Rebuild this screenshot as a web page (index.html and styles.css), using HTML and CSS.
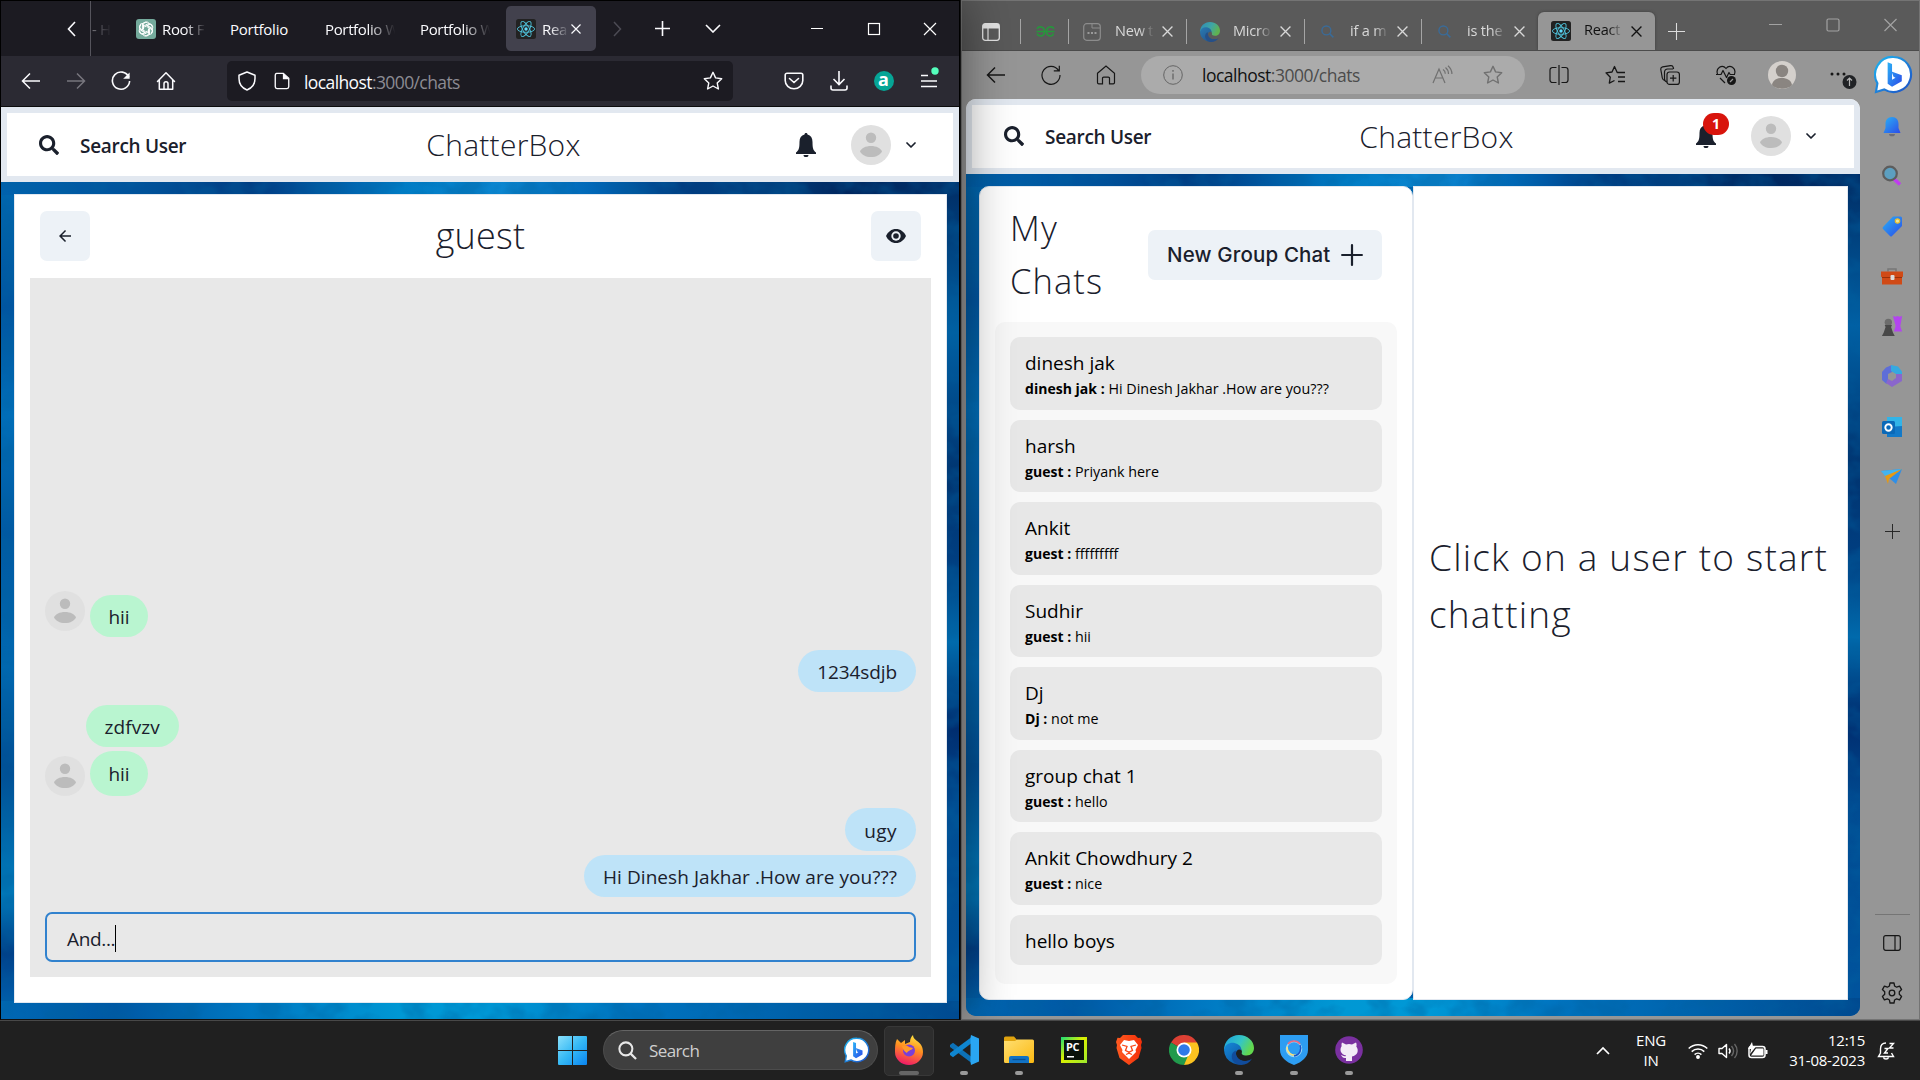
FILE: index.html
```html
<!DOCTYPE html>
<html lang="en">
<head>
<meta charset="utf-8">
<title>ChatterBox</title>
<link rel="stylesheet" href="styles.css">
</head>
<body>
<svg class="sprite" width="0" height="0" aria-hidden="true">
  <defs>
    <linearGradient id="gWin" x1="0" y1="0" x2="1" y2="1"><stop offset="0" stop-color="#8be0fb"/><stop offset=".5" stop-color="#35b9f5"/><stop offset="1" stop-color="#0a84f0"/></linearGradient>
    <linearGradient id="gBing" x1="0" y1="0" x2="1" y2="1"><stop offset="0" stop-color="#1fb6f0"/><stop offset="1" stop-color="#1d4fc4"/></linearGradient>
    <linearGradient id="gFox" x1=".7" y1="0" x2=".4" y2="1"><stop offset="0" stop-color="#ffe640"/><stop offset=".45" stop-color="#ff9020"/><stop offset="1" stop-color="#f01a68"/></linearGradient>
    <linearGradient id="gEdgeA" x1="0" y1="0" x2="1" y2=".4"><stop offset="0" stop-color="#1b9fe0"/><stop offset=".6" stop-color="#35c6c4"/><stop offset="1" stop-color="#62d84e"/></linearGradient>
    <linearGradient id="gEdgeB" x1="0" y1="0" x2="1" y2="1"><stop offset="0" stop-color="#1589d8"/><stop offset="1" stop-color="#0c4a98"/></linearGradient>
    <linearGradient id="gFold" x1="0" y1="0" x2="1" y2="1"><stop offset="0" stop-color="#ffdf72"/><stop offset="1" stop-color="#fcb912"/></linearGradient>
    <linearGradient id="gBlue" x1="0" y1="0" x2="1" y2="1"><stop offset="0" stop-color="#2bb2f5"/><stop offset="1" stop-color="#2b4be8"/></linearGradient>
    <linearGradient id="gBrave" x1="0" y1="0" x2="1" y2="0"><stop offset="0" stop-color="#ff5a20"/><stop offset="1" stop-color="#f4300a"/></linearGradient>
    <filter id="water" x="0" y="0" width="100%" height="100%"><feTurbulence type="fractalNoise" baseFrequency=".035 .045" numOctaves="3" seed="7"/><feColorMatrix values="0 0 0 0 0  0 0 0 0 .12  0 0 0 0 .35  3.4 0 0 0 -1.400"/></filter>
  </defs>
  <symbol id="search" viewBox="0 0 512 512"><path d="M505 442.700 405.300 343c-4.500-4.500-10.600-7-17-7H372c27.600-35.300 44-79.700 44-128C416 93.100 322.900 0 208 0S0 93.100 0 208s93.100 208 208 208c48.300 0 92.700-16.400 128-44v16.300c0 6.400 2.500 12.500 7 17l99.700 99.700c9.400 9.400 24.600 9.400 33.900 0l28.300-28.300c9.400-9.400 9.400-24.600.1-34zM208 336c-70.700 0-128-57.200-128-128 0-70.700 57.200-128 128-128 70.700 0 128 57.200 128 128 0 70.700-57.200 128-128 128z" fill="currentColor"/></symbol>
  <symbol id="bell" viewBox="0 0 20 24"><path d="M10 0c1 0 1.500.7 1.500 1.500 3.300.8 5 3.500 5 7.500 0 6 .7 8.500 3.500 10.500V21H0v-1.500C2.800 17.500 3.500 15 3.500 9c0-4 1.700-6.700 5-7.500C8.500.7 9 0 10 0zM7.500 22h5a2.500 2.200 0 0 1-5 0z" fill="currentColor"/></symbol>
  <symbol id="chev" viewBox="0 0 10 6"><path d="M1 1l4 4 4-4" fill="none" stroke="currentColor" stroke-width="1.700" stroke-linecap="round" stroke-linejoin="round"/></symbol>
  <symbol id="avatar" viewBox="0 0 40 40"><circle cx="20" cy="20" r="20" fill="#e0e0e0"/><circle cx="20" cy="12.700" r="5.200" fill="#bcbcbc"/><path d="M9 26.500c1.500-3.300 5.500-5.500 11-5.500s9.500 2.200 11 5.500C29 30 25.500 32 20 32S11 30 9 26.500z" fill="#bcbcbc"/></symbol>
  <symbol id="react" viewBox="0 0 20 20"><rect width="20" height="20" rx="2.500" fill="#222"/><g fill="none" stroke="#4fc3dc" stroke-width=".9"><ellipse cx="10" cy="10" rx="8.600" ry="3.300"/><ellipse cx="10" cy="10" rx="8.600" ry="3.300" transform="rotate(60 10 10)"/><ellipse cx="10" cy="10" rx="8.600" ry="3.300" transform="rotate(120 10 10)"/></g><circle cx="10" cy="10" r="1.700" fill="#61dafb"/></symbol>
  <symbol id="x" viewBox="0 0 10 10"><path d="M.5.5l9 9M9.500.5l-9 9" stroke="currentColor" stroke-width="1.200"/></symbol>
  <symbol id="plus" viewBox="0 0 20 20"><path d="M10 1v18M1 10h18" stroke="currentColor" stroke-width="2" stroke-linecap="round"/></symbol>
  <symbol id="plusThin" viewBox="0 0 16 16"><path d="M8 0v16M0 8h16" stroke="currentColor" stroke-width="1"/></symbol>
  <symbol id="back" viewBox="0 0 20 20"><path d="M9 2.500L1.500 10 9 17.500M1.500 10h17.500" fill="none" stroke="currentColor" stroke-width="1.500"/></symbol>
  <symbol id="reload" viewBox="0 0 20 20"><path d="M17.800 6A8.600 8.600 0 1 0 18.600 10" fill="none" stroke="currentColor" stroke-width="1.600"/><path d="M18.600 1.500v6.300h-6.400z" fill="currentColor"/></symbol>
  <symbol id="reloadThin" viewBox="0 0 20 20"><path d="M17.500 5.300A9 9 0 1 0 19 10M18.300.7v5.100h-5.500" fill="none" stroke="currentColor" stroke-width="1.200"/></symbol>
  <symbol id="home" viewBox="0 0 20 20"><path d="M1.500 10.500L10 1.800l8.500 8.700M3.300 9v9.200h13.400V9M8 18v-5.200a2 2 0 0 1 4 0V18" fill="none" stroke="currentColor" stroke-width="1.500" stroke-linecap="round" stroke-linejoin="round"/></symbol>
  <symbol id="homeThin" viewBox="0 0 20 20"><path d="M1.500 8.300L10 1l8.500 7.300v9.200a1.300 1.300 0 0 1-1.300 1.300h-3.700v-5.500a1.200 1.200 0 0 0-1.200-1.200H7.700a1.200 1.200 0 0 0-1.200 1.200v5.500H2.800a1.300 1.300 0 0 1-1.300-1.300z" fill="none" stroke="currentColor" stroke-width="1.200"/></symbol>
  <symbol id="shield" viewBox="0 0 20 20"><path d="M10 1l8 3.300v3.200c0 5-3 9.500-8 11.500-5-2-8-6.500-8-11.500V4.300z" fill="none" stroke="currentColor" stroke-width="1.500" stroke-linejoin="round"/></symbol>
  <symbol id="page" viewBox="0 0 20 20"><path d="M4 1.500h7.500L17.500 7v9.500a2 2 0 0 1-2 2h-11a2 2 0 0 1-2-2v-13a2 2 0 0 1 1.500-2z" fill="none" stroke="currentColor" stroke-width="1.500"/><path d="M11 1v7h7z" fill="currentColor"/></symbol>
  <symbol id="star" viewBox="0 0 20 20"><path d="M10 1.300l2.600 5.600 6.100.8-4.500 4.200 1.200 6.100L10 15l-5.400 3 1.200-6.100L1.300 7.700l6.100-.8z" fill="none" stroke="currentColor" stroke-width="1.400" stroke-linejoin="round"/></symbol>
  <symbol id="bing" viewBox="0 0 40 40"><path d="M20 2a18 18 0 1 1-9.500 33.300L2 38l1.500-9A18 18 0 0 1 20 2z" fill="#fff" stroke="url(#gBing)" stroke-width="2.200"/><path d="M14 7.500l4.500 1.800v16l3.500-2-2-1-2-5.500 10.500 4v6L18.500 32.500 14 29.500z" fill="url(#gBlue)"/></symbol>
  <symbol id="edge" viewBox="0 0 30 30"><path d="M0 15C0 6.500 6.500 0 15 0s15 6 15 13c0 4.500-3 7.500-7.500 7.500-4 0-5.500-1.500-4.500-3.500C17.500 10.500 6 8 0 15z" fill="url(#gEdgeA)"/><path d="M0 15c1-5.500 6-8 10.500-7 4 1 7 3.600 7 7.200C14 13 10.500 17 12.500 21.500c2 4 7 5.500 12.500 4A15 15 0 0 1 0 15z" fill="url(#gEdgeB)"/><path d="M12 15.500c-1 5.500 3 10.500 9 10.500 3 0 5.500-1 7-2.500-4 7-12 8-17 4.500-5-4-4-11 1-12.500z" fill="#114c9c"/></symbol>
  <symbol id="mag" viewBox="0 0 14 14"><circle cx="5.800" cy="5.800" r="4.800" fill="none" stroke="currentColor" stroke-width="1.500"/><path d="M9.300 9.300L13.300 13.300" stroke="currentColor" stroke-width="1.600"/></symbol>
</svg>

<!-- Edge window, right half of the desktop -->
<section class="window edge-window">
  <div class="edge-tabs">
    <svg class="e-side" width="18" height="18" viewBox="0 0 18 18"><rect x=".7" y=".7" width="16.600" height="16.600" rx="2.500" fill="none" stroke="#e4e4e4" stroke-width="1.300"/><path d="M1 1h16v4.500H1z" fill="#e4e4e4"/><path d="M6 5v12" stroke="#e4e4e4" stroke-width="1.200"/></svg>
    <i class="sep s1"></i>
    <svg class="gfg" width="19" height="11" viewBox="0 0 19 11"><path d="M.5 5.500h18M1 2.800C2.500 0 8.500 0 8.500 5.500S2.500 11 1 7.500M18 2.800C16.500 0 10.500 0 10.500 5.500s6 5.500 7 2" fill="none" stroke="#27963c" stroke-width="1.600"/></svg>
    <i class="sep s2"></i>
    <svg class="e-new" width="18" height="18" viewBox="0 0 18 18"><rect x=".7" y=".7" width="16.600" height="16.600" rx="3" fill="none" stroke="#8c8c8c" stroke-width="1.200"/><path d="M9 1v4h8" fill="none" stroke="#8c8c8c"/><path d="M4.500 10h2M8 10h2M11.500 10h2" stroke="#9a9a9a" stroke-width="1.800"/></svg>
    <span class="etab-text t-new">New t</span><svg class="ex" width="11" height="11"><use href="#x"/></svg>
    <i class="sep s3"></i>
    <svg class="e-edge" width="20" height="20" opacity=".7"><use href="#edge"/></svg>
    <span class="etab-text t-micro">Micro</span><svg class="ex" width="11" height="11"><use href="#x"/></svg>
    <i class="sep s3"></i>
    <svg class="e-mag" width="13" height="13"><use href="#mag"/></svg>
    <span class="etab-text t-if">if a m</span><svg class="ex" width="11" height="11"><use href="#x"/></svg>
    <i class="sep s3"></i>
    <svg class="e-mag" width="13" height="13"><use href="#mag"/></svg>
    <span class="etab-text t-is">is the</span><svg class="ex" width="11" height="11"><use href="#x"/></svg>
    <div class="etab-active"><svg width="20" height="20"><use href="#react"/></svg><span class="etab-text">React</span><svg class="ex" width="11" height="11"><use href="#x"/></svg></div>
    <svg class="e-plus" width="17" height="17"><use href="#plusThin"/></svg>
    <svg class="e-controls" width="136" height="14" viewBox="0 0 136 14" fill="none" stroke="#a2a2a2" stroke-width="1.200"><path d="M0 6.500h13M115.500 1l12 12M127.500 1l-12 12"/><rect x="58" y="1" width="12" height="12" rx="1.500"/></svg>
  </div>
  <div class="edge-bar">
    <div class="ebtn"><svg width="20" height="20"><use href="#back"/></svg></div>
    <div class="ebtn"><svg width="20" height="20"><use href="#reloadThin"/></svg></div>
    <div class="ebtn"><svg width="20" height="20"><use href="#homeThin"/></svg></div>
    <div class="edge-url">
      <svg width="20" height="20" viewBox="0 0 20 20" fill="none" stroke="#656565"><circle cx="10" cy="10" r="9.300"/><path d="M10 8.500v6M10 5v1.700" stroke-width="1.300"/></svg>
      <span class="url-text">localhost<em>:3000/chats</em></span>
      <svg class="read" width="21" height="20" viewBox="0 0 21 20" fill="none" stroke="#707070" stroke-width="1.200"><path d="M1 18L7 4l6 14M3.200 13h7.600M11 4.500c1.500 1 2.300 2.500 2.300 4.200M13.500 2.500c2 1.600 3 3.800 3 6.500M16 .7c2.500 2.200 3.900 5 3.900 8.300"/></svg>
      <svg width="20" height="20" color="#707070"><use href="#star"/></svg>
    </div>
    <div class="etools">
      <svg width="20" height="20" viewBox="0 0 20 20" fill="none" stroke="#161616" stroke-width="1.200"><path d="M7.500 2.500h-4a2.500 2.500 0 0 0-2.500 2.500v10a2.500 2.500 0 0 0 2.500 2.500h4M12.500 2.500h4A2.500 2.500 0 0 1 19 5v10a2.500 2.500 0 0 1-2.500 2.500h-4M10 0v20"/></svg>
      <svg width="20" height="20" viewBox="0 0 20 20" fill="none" stroke="#161616" stroke-width="1.300"><path d="M14 7.500h-1.800L9.500 1.500 7 7l-6 .8 4.300 4.400-1 6L9.500 15.500M12.500 7.500H20M13 12h7M13 16.500h7" stroke-linejoin="round"/></svg>
      <svg width="20" height="20" viewBox="0 0 20 20" fill="none" stroke="#161616" stroke-width="1.200"><rect x="7" y="7" width="12.400" height="12.400" rx="2.500"/><path d="M13.200 10v6.400M10 13.200h6.400M4.500 15.500C3 15 2.500 14 2.300 13L.8 4.500c-.2-1.300.5-2.400 1.800-2.700L10.500.7c1.400-.2 2.500.6 2.800 1.900L13.600 4M7 17C5 16.500 4.500 15.500 4.500 14V7a3 3 0 0 1 3-3H13"/></svg>
      <svg width="20" height="20" viewBox="0 0 20 20" fill="none" stroke="#161616" stroke-width="1.200"><path d="M1.500 9C-.5 3.500 6-1.500 10 3.500 14-1.500 20.500 3.500 18.500 9M4 13l5 5M0 9.500h5l2-4 3.500 7 2.500-5 1.200 2H19" stroke-linejoin="round"/><circle cx="15.500" cy="15.500" r="4.500" fill="#161616" stroke="none"/><path d="M14 17l3-3" stroke="#969696"/></svg>
      <svg width="28" height="28" viewBox="0 0 28 28"><circle cx="14" cy="14" r="14" fill="#d4d0cc"/><circle cx="14" cy="10" r="6.200" fill="#8a8581"/><path d="M4 24c1-5 5-7 10-7s9 2 10 7c-5 5-15 5-20 0z" fill="#8a8581"/></svg>
      <svg width="30" height="28" viewBox="0 0 30 28"><g fill="#161616"><circle cx="5" cy="13" r="1.500"/><circle cx="11" cy="13" r="1.500"/><circle cx="17" cy="13" r="1.500"/></g><circle cx="22.500" cy="21" r="7" fill="#202225"/><path d="M22.500 25v-8M20 19.500l2.500-2.500 2.500 2.500" fill="none" stroke="#b5b5b5" stroke-width="1.200"/></svg>
    </div>
  </div>
  <div class="edge-main">
    <div class="page edge-page">
      <header class="app-head edge-head">
        <div class="find"><svg width="20" height="20"><use href="#search"/></svg><b>Search User</b></div>
        <h1 class="brand">ChatterBox</h1>
        <div class="user"><span class="bell-wrap"><svg width="20" height="24"><use href="#bell"/></svg><span class="badge">1</span></span><svg width="40" height="40"><use href="#avatar"/></svg><svg class="uchev" width="10" height="6"><use href="#chev"/></svg></div>
      </header>
      <div class="canvas edge-canvas">
        <svg class="water"><rect width="100%" height="100%" filter="url(#water)"/></svg>
        <div class="panes">
          <aside class="chats">
            <div class="chats-head"><h2>My Chats</h2><button class="new-group"><span>New Group Chat</span><svg width="22" height="22"><use href="#plus"/></svg></button></div>
            <ul class="chat-list">
              <li><p>dinesh jak</p><small><b>dinesh jak :</b> Hi Dinesh Jakhar .How are you???</small></li>
              <li><p>harsh</p><small><b>guest :</b> Priyank here</small></li>
              <li><p>Ankit</p><small><b>guest :</b> fffffffff</small></li>
              <li><p>Sudhir</p><small><b>guest :</b> hii</small></li>
              <li><p>Dj</p><small><b>Dj :</b> not me</small></li>
              <li><p>group chat 1</p><small><b>guest :</b> hello</small></li>
              <li><p>Ankit Chowdhury 2</p><small><b>guest :</b> nice</small></li>
              <li class="solo"><p>hello boys</p></li>
            </ul>
          </aside>
          <div class="empty"><p>Click on a user to start<br>chatting</p></div>
        </div>
      </div>
    </div>
    <nav class="edge-rail">
      <svg width="22" height="22" viewBox="0 0 22 22"><path d="M11 2c4.500 0 6.500 3 6.500 7v4l2 5h-17l2-5V9c0-4 2-7 6.500-7z" fill="url(#gBlue)"/><path d="M8 19h6a3 2.300 0 0 1-6 0z" fill="#6d6d78"/></svg>
      <svg width="22" height="22" viewBox="0 0 22 22"><path d="M13 14l6 5.500" stroke="#c03cf0" stroke-width="3.500"/><circle cx="9" cy="8.500" r="6.800" fill="#5c9fc0" stroke="#5d5d5d" stroke-width="2.200"/></svg>
      <svg width="22" height="22" viewBox="0 0 22 22"><path d="M12 1.500h7.500q1.500 0 1.500 1.500v8L11 21q-1 1-2 0l-7-7q-1-1 0-2z" fill="url(#gBlue)"/><circle cx="16.500" cy="6" r="2.200" fill="#e8e8a0" stroke="#e9b92c" stroke-width="1.200"/></svg>
      <svg width="22" height="22" viewBox="0 0 22 22"><path d="M7 6.500V4h8v2.500" fill="none" stroke="#777" stroke-width="1.500"/><path d="M0 6.500h22v5l-1 1v7H1v-7l-1-1z" fill="#d04a16"/><path d="M1 12.500h20" stroke="#9a3008"/><rect x="9.500" y="10" width="4" height="5" rx="1" fill="#ddd"/></svg>
      <svg width="22" height="22" viewBox="0 0 24 24"><path d="M13 1l3 1 2-1 2 1 3-1-1 6-1 5 2 6h-9l2-6z" fill="#b344ef"/><circle cx="8" cy="8" r="4" fill="#6c6c6c"/><path d="M4 11h8l-1 2 2 6 2 4H1l2-4 2-6z" fill="#484848"/></svg>
      <svg width="22" height="22" viewBox="0 0 22 22"><path d="M5 2.500L11 0v7L7 9v5L5.500 19 1 15V7z" fill="#5e6ed8"/><path d="M10 0l7 1.500 4 5v6L15 9l-5-3z" fill="#36a9e0"/><path d="M21 9v7L11 22l-6-4 2-4 4 2 4-3V9z" fill="#8a66cc"/></svg>
      <svg width="22" height="22" viewBox="0 0 22 22"><path d="M6 1h15v20H6z" fill="#32b4e8"/><path d="M6 11l15-1v11H6z" fill="#1379c8"/><rect x="1" y="5" width="13" height="13" rx="1.500" fill="#0b69b8"/><circle cx="7.500" cy="11.500" r="3.200" fill="none" stroke="#fff" stroke-width="1.900"/></svg>
      <svg width="22" height="22" viewBox="0 0 22 22"><path d="M0 5l21-2-6 15z" fill="#2e8fe8"/><path d="M0 5l21-2L5 11z" fill="#42b4f0"/><path d="M21 3L4 10l3 8 1-5z" fill="#e59a14"/></svg>
      <svg class="rail-plus" width="15" height="15" color="#222"><use href="#plusThin"/></svg>
      <i class="rail-line"></i>
      <svg width="18" height="16" viewBox="0 0 18 16" fill="none" stroke="#161616" stroke-width="1.200"><rect x=".7" y=".7" width="16.600" height="14.600" rx="2"/><path d="M12 1v14"/></svg>
      <svg class="gear" width="22" height="22" viewBox="0 0 22 22" fill="none" stroke="#161616" stroke-width="1.300" stroke-linejoin="round"><path d="M9 1h4l.6 3 2 1.200 3-1 2 3.400-2.300 2.100v2.600l2.300 2.100-2 3.400-3-1-2 1.200L13 21H9l-.6-3-2-1.200-3 1-2-3.400 2.300-2.100V9.700L1.400 7.600l2-3.400 3 1 2-1.200z"/><circle cx="11" cy="11" r="2.800"/></svg>
    </nav>
  </div>
  <div class="rail-bing"><svg width="39" height="39"><use href="#bing"/></svg></div>
</section>

<!-- Firefox window, left half of the desktop -->
<section class="window fox-window">
  <div class="fox-tabs">
    <svg class="f-left" width="9" height="16" viewBox="0 0 9 16"><path d="M8 1L1.500 8 8 15" fill="none" stroke="#fbfbfe" stroke-width="1.600"/></svg>
    <i class="fox-line"></i>
    <span class="ftext f-h">- H</span>
    <svg class="f-gpt" width="20" height="20" viewBox="0 0 20 20"><rect width="20" height="20" rx="3" fill="#74aa9c"/><g fill="none" stroke="#fff" stroke-width="1"><path id="petal" d="M7.500 10.500V5.800a3 3 0 0 1 5.700-1.200M7.500 7.300l4-2.300a3 3 0 0 1 4.500 2.600"/><use href="#petal" transform="rotate(60 10 10)"/><use href="#petal" transform="rotate(120 10 10)"/><use href="#petal" transform="rotate(180 10 10)"/><use href="#petal" transform="rotate(240 10 10)"/><use href="#petal" transform="rotate(300 10 10)"/></g></svg>
    <span class="ftext f-root">Root F</span>
    <span class="ftext f-p1">Portfolio</span>
    <span class="ftext f-p2">Portfolio W</span>
    <span class="ftext f-p3">Portfolio W</span>
    <div class="ftab"><svg width="20" height="20"><use href="#react"/></svg><span class="ftext">Rea</span><svg width="10" height="10" color="#fbfbfe"><use href="#x"/></svg></div>
    <svg class="f-right" width="9" height="16" viewBox="0 0 9 16"><path d="M1 1l6.500 7L1 15" fill="none" stroke="#4c4b54" stroke-width="1.500"/></svg>
    <svg class="f-plus" width="15" height="15" viewBox="0 0 15 15"><path d="M7.500 0v15M0 7.500h15" stroke="#fbfbfe" stroke-width="1.600"/></svg>
    <svg class="f-down" width="16" height="9" viewBox="0 0 16 9"><path d="M1 1l7 7 7-7" fill="none" stroke="#fbfbfe" stroke-width="1.600"/></svg>
    <svg class="f-controls" width="126" height="14" viewBox="0 0 126 14" fill="none" stroke="#fff" stroke-width="1.200"><path d="M0 6.500h12M113 1l12 12M125 1l-12 12"/><rect x="57.500" y="1.500" width="11" height="11"/></svg>
  </div>
  <div class="fox-bar">
    <div class="fbtn"><svg width="20" height="20"><use href="#back"/></svg></div>
    <div class="fbtn off"><svg class="flip" width="20" height="20"><use href="#back"/></svg></div>
    <div class="fbtn"><svg width="20" height="20"><use href="#reload"/></svg></div>
    <div class="fbtn"><svg width="20" height="20"><use href="#home"/></svg></div>
    <div class="fox-url">
      <svg width="20" height="20"><use href="#shield"/></svg><svg class="f-page" width="18" height="18"><use href="#page"/></svg>
      <span class="url-text">localhost<em>:3000/chats</em></span>
      <svg class="f-star" width="20" height="20"><use href="#star"/></svg>
    </div>
    <div class="fox-tools">
      <div class="fbtn"><svg width="20" height="18" viewBox="0 0 20 18" fill="none" stroke="currentColor" stroke-width="1.600"><path d="M3 1.200h14a1.800 1.800 0 0 1 1.800 1.800v5.500a8.500 8 0 0 1-17.600 0V3A1.800 1.800 0 0 1 3 1.200z"/><path d="M5.500 6.500L10 10.500l4.500-4" stroke-linecap="round"/></svg></div>
      <div class="fbtn"><svg width="18" height="20" viewBox="0 0 18 20" fill="none" stroke="currentColor" stroke-width="1.600"><path d="M9 0v13M3.500 8L9 13.500 14.500 8M1 14.500V17a2 2 0 0 0 2 2h12a2 2 0 0 0 2-2v-2.500"/></svg></div>
      <div class="fbtn"><span class="ask">a</span></div>
      <div class="fbtn"><svg class="menu" width="20" height="22" viewBox="0 0 20 22"><path d="M2 8.500h7M2 14h16M2 19.500h16" stroke="#fbfbfe" stroke-width="1.600"/><circle cx="16" cy="4" r="3.700" fill="#54ffbd"/></svg></div>
    </div>
  </div>
  <div class="page fox-page">
    <header class="app-head fox-head">
      <div class="find"><svg width="20" height="20"><use href="#search"/></svg><b>Search User</b></div>
      <h1 class="brand">ChatterBox</h1>
      <div class="user"><svg width="20" height="24"><use href="#bell"/></svg><svg width="40" height="40"><use href="#avatar"/></svg><svg class="uchev" width="10" height="6"><use href="#chev"/></svg></div>
    </header>
    <div class="canvas fox-canvas">
      <svg class="water"><rect width="100%" height="100%" filter="url(#water)"/></svg>
      <main class="chat-box">
        <div class="chat-head">
          <button class="sq"><svg width="18" height="18" viewBox="0 0 24 24"><path d="M20 11H7.830l5.590-5.590L12 4l-8 8 8 8 1.410-1.410L7.830 13H20v-2z" fill="#1a202c"/></svg></button>
          <h2>guest</h2>
          <button class="sq"><svg width="20" height="14" viewBox="0 0 20 14"><path d="M10 0c4.500 0 8 2.700 10 7-2 4.300-5.500 7-10 7S2 11.300 0 7c2-4.300 5.500-7 10-7z" fill="#1a202c"/><circle cx="10" cy="7" r="4.700" fill="#edf2f7"/><circle cx="10" cy="7" r="2.800" fill="#1a202c"/></svg></button>
        </div>
        <div class="messages">
          <div class="msg m1"><svg width="40" height="40"><use href="#avatar"/></svg><span class="them">hii</span></div>
          <div class="msg me m2"><span>1234sdjb</span></div>
          <div class="msg m3"><span class="them">zdfvzv</span></div>
          <div class="msg m4"><svg width="40" height="40"><use href="#avatar"/></svg><span class="them">hii</span></div>
          <div class="msg me m5"><span>ugy</span></div>
          <div class="msg me m6"><span class="wide">Hi Dinesh Jakhar .How are you???</span></div>
          <div class="compose">And...<i></i></div>
        </div>
      </main>
    </div>
  </div>
</section>

<footer class="taskbar">
  <svg class="win" width="29" height="29" viewBox="0 0 29 29" fill="url(#gWin)"><path d="M1 0h13v14H0V1a1 1 0 0 1 1-1zM15 0h13a1 1 0 0 1 1 1v13H15zM0 15h14v14H1a1 1 0 0 1-1-1zM15 15h14v13a1 1 0 0 1-1 1H15z"/></svg>
  <div class="tsearch"><svg width="19" height="19" color="#e8e8e8"><use href="#mag"/></svg><span>Search</span><svg width="26" height="26"><use href="#bing"/></svg></div>
  <div class="apps">
    <div class="app on"><svg width="30" height="30" viewBox="0 0 30 30"><path d="M3 4l4 4 4-3 0 4 5-2c0-3 1-5 3-7 0 3 2 4 4 6 3 2 6 5 6 11a14 13 0 0 1-28 0C1 12 1 8 3 4z" fill="url(#gFox)"/><circle cx="15" cy="15.500" r="6" fill="#7a3fd8"/><path d="M8 11c4-1 6 0 7 1l4 1c-2 3-5 2-6 5-2-1-4-3-5-7z" fill="#ff9a28"/></svg></div>
    <div class="app run"><svg width="30" height="30" viewBox="0 0 30 30"><path d="M1 10l3-2.300L24 23v6L1 12z" fill="#0d72b8"/><path d="M1 20l3 2.300L24 7V1L1 18z" fill="#0f86d0"/><path d="M22 0l8 3.500v23L22 30l-.5-3V3z" fill="#2aa6f2"/></svg></div>
    <div class="app run"><svg width="30" height="28" viewBox="0 0 30 28"><path d="M0 2a1.500 1.500 0 0 1 1.500-1.500H10L13 4v6H0z" fill="#e0a30e"/><path d="M0 5h11l2-1.500h15.500A1.500 1.500 0 0 1 30 5v20.500a1.500 1.500 0 0 1-1.500 1.500h-27A1.500 1.500 0 0 1 0 25.500z" fill="url(#gFold)"/><path d="M5 27v-5a2 2 0 0 1 2-2h16a2 2 0 0 1 2 2v5z" fill="#1272c4"/><path d="M8.500 23.500h13" stroke="#0a4f94" stroke-width="1.300"/></svg></div>
    <div class="app"><span class="pc"><b>PC</b></span></div>
    <div class="app"><svg width="26" height="30" viewBox="0 0 26 30"><path d="M7 0h12l3 3 2.500-.3L26 7l-1 3 .5 3-3 10L13 30 3.500 23 .5 13 1 10 0 7l1.500-4.300L4 3z" fill="url(#gBrave)"/><path d="M8 5l5 1 5-1 4 5-2.500 5 .5 2-3 3-4 4-4-4-3-3 .5-2L4 10z" fill="#fff"/><path d="M6 10l5 1.500-1.500 4 3.500 1.700 3.500-1.700L15 11.500l5-1.500M10 19.500l3-1.300 3 1.300" fill="none" stroke="#fa4514" stroke-width="1.300"/></svg></div>
    <div class="app"><svg width="30" height="30" viewBox="0 0 30 30"><path d="M15 15L2 7.500A15 15 0 0 1 28 7.500z" fill="#dc4034"/><path d="M15 15L2 7.500A15 15 0 0 0 15 30l6.500-11.200z" fill="#219a4c"/><path d="M15 15h6.500L15 30A15 15 0 0 0 28 7.500H15z" fill="#fcc320"/><circle cx="15" cy="15" r="7.500" fill="#fff"/><circle cx="15" cy="15" r="5.800" fill="#2e79e8"/></svg></div>
    <div class="app run"><svg width="30" height="30"><use href="#edge"/></svg></div>
    <div class="app run"><svg width="28" height="30" viewBox="0 0 28 30"><path d="M0 0h28v15c0 7-6 12-14 15C6 27 0 22 0 15z" fill="#2d9df2"/><g fill="none" stroke-width="1.500"><circle cx="14" cy="14" r="7.500" stroke="#9edcf6"/><path d="M8 9c3-4 9-4 12 0" stroke="#e86a80"/><path d="M7 12c0 6 5 9 9 8" stroke="#ffe27a"/><path d="M20 10c2 4 0 10-6 11" stroke="#1a52c8"/></g></svg></div>
    <div class="app run"><svg width="28" height="28" viewBox="0 0 28 28"><circle cx="14" cy="14" r="13.800" fill="#7a30a0"/><path d="M7 6.500l4 2q3-.8 6 0l4-2c.8 1.500.7 3 .3 4 3 4 1.200 9-4.300 10V25h-6v-3c-3 .5-3.500-1-5-3 2 0 2.500 2 5 1v-.5c-5-1-7-5.500-4.300-9.500-.4-1-.3-2 .3-3.500z" fill="#f3ebf7"/></svg></div>
  </div>
  <div class="tray">
    <svg class="t-up" width="14" height="9" viewBox="0 0 14 9"><path d="M1 8l6-6 6 6" fill="none" stroke="#fff" stroke-width="1.700"/></svg>
    <div class="lang">ENG<br>IN</div>
    <svg class="t-wifi" width="20" height="16" viewBox="0 0 20 16" fill="none" stroke="#fff" stroke-width="1.500"><path d="M.7 5.500a13.500 13.500 0 0 1 18.600 0M3.700 8.600a9.200 9.200 0 0 1 12.600 0M6.600 11.600a5 5 0 0 1 6.800 0"/><circle cx="10" cy="14" r="1.200" fill="#fff"/></svg>
    <svg class="t-vol" width="21" height="16" viewBox="0 0 21 16" fill="none" stroke="#fff" stroke-width="1.400"><path d="M1 5.500h3L8.500 1.500v13L4 10.500H1z" stroke-linejoin="round"/><path d="M11 5.500c1.300 1.500 1.300 3.500 0 5"/><path d="M13.500 3c2.500 3 2.500 7 0 10M16.500 1c3.500 4 3.500 10 0 14" stroke="#666"/></svg>
    <svg class="t-bat" width="20" height="17" viewBox="0 0 20 17"><rect x="1" y="4.500" width="16" height="11" rx="2.500" fill="none" stroke="#fff" stroke-width="1.500"/><path d="M8 6.500h7.500v7H3zM17.500 8h2v4h-2zM4 0L0 7h3L2 12l6-7.500H5z" fill="#fff"/></svg>
    <div class="clock">12:15<br>31-08-2023</div>
    <svg class="t-bell" width="18" height="18" viewBox="0 0 18 18" fill="none" stroke="#fff" stroke-width="1.400"><path d="M9 1C5 1 3.500 4 3.500 7v4L1.500 14.500h15L14.500 11M6.500 15.500c.5 2 4.500 2 5 0M12.500 1.500h4l-4 4.500h4M7.500 6.500h3.500l-3.500 4.500h3.500"/></svg>
  </div>
</footer>
</body>
</html>
```
FILE: styles.css
```css
* { box-sizing: border-box; }
html, body { margin: 0; height: 100%; }
body { width: 1920px; height: 1080px; position: relative; overflow: hidden; background: #202020; font-family: "Open Sans", "Noto Sans", sans-serif; color: #1a202c; }
svg { display: block; flex: none; }
h1, h2, p, ul { margin: 0; padding: 0; font-weight: 300; list-style: none; }
button { border: 0; font: inherit; color: inherit; padding: 0; }
em { font-style: normal; }
.sprite { position: absolute; }

/* Desktop windows */
.window { position: absolute; top: 0; height: 1020px; display: flex; flex-direction: column; }
.fox-window { left: 0; width: 960px; border: 1px solid #000; border-bottom-color: #111; background: #1c1b22; box-shadow: 0 0 50px rgba(0,0,0,.5); clip-path: inset(0 -70px 0 0); }
.edge-window { left: 961px; width: 959px; border: 1px solid #747474; background: #969696; }

/* Firefox chrome */
.fox-tabs { height: 55px; flex: none; display: flex; align-items: center; }
.fox-tabs > * { flex: none; }
.ftext { font-size: 15px; letter-spacing: -.35px; color: #fbfbfe; white-space: nowrap; overflow: hidden; line-height: 24px; padding-top: 1px; }
.f-left { margin-left: 66px; }
.fox-line { width: 1px; height: 55px; background: #55545c; margin-left: 14px; }
.f-h { width: 20px; margin-left: 1px; color: #77767d; mask-image: linear-gradient(90deg, #000, transparent); }
.f-gpt { margin-left: 24px; }
.f-root { width: 46px; margin-left: 6px; mask-image: linear-gradient(90deg, #000 50%, transparent 95%); }
.f-p1 { width: 60px; margin-left: 22px; letter-spacing: -.25px; }
.f-p2 { width: 78px; margin-left: 35px; mask-image: linear-gradient(90deg, #000 55%, transparent 90%); }
.f-p3 { width: 78px; margin-left: 17px; mask-image: linear-gradient(90deg, #000 55%, transparent 90%); }
.ftab { width: 90px; height: 45px; margin-left: 8px; border-radius: 5px; background: #42414d; display: flex; align-items: center; padding-left: 10px; }
.ftab .ftext { width: 27px; margin: 0 2px 0 6px; mask-image: linear-gradient(90deg, #000 30%, transparent); }
.f-right { margin-left: 17px; }
.f-plus { margin-left: 33px; }
.f-down { margin-left: 35px; }
.f-controls { margin-left: 90px; }
.fox-bar { height: 51px; flex: none; display: flex; align-items: center; background: #2b2a33; border-bottom: 1px solid #0c0c0d; padding-left: 7px; }
.fbtn { width: 45px; flex: none; display: flex; justify-content: center; color: #fbfbfe; }
.off { color: #77767e; }
.flip { transform: scaleX(-1); }
.fox-url { width: 506px; height: 40px; margin-left: 39px; border-radius: 5px; background: #1c1b22; color: #fbfbfe; display: flex; align-items: center; padding-left: 10px; }
.f-page { margin-left: 16px; }
.fox-url .url-text { margin-left: 13px; letter-spacing: -.6px; padding-top: 2px; }
.url-text { font-size: 17.500px; letter-spacing: -.5px; line-height: 28px; }
.fox-url em { color: #8c8b93; }
.f-star { margin-left: auto; margin-right: 10px; }
.fox-tools { display: flex; align-items: center; margin-left: 38px; }
.ask { width: 20px; height: 20px; border-radius: 50%; background: #06a596; color: #fff; font-weight: 700; font-size: 18px; line-height: 16px; text-align: center; }
.menu { margin-top: -6px; }

/* Shared ChatterBox page */
.page { display: flex; flex-direction: column; flex: 1; overflow: hidden; }
.app-head { height: 75px; flex: none; border: 6px solid #e2e8f0; background: #fff; display: grid; grid-template-columns: 1fr auto 1fr; align-items: center; }
.find { display: flex; align-items: center; gap: 21px; padding-left: 32px; }
.find b { font-size: 19px; font-weight: 600; letter-spacing: -.3px; line-height: 28px; padding-top: 2px; white-space: nowrap; }
.brand { margin-left: 47px; font-size: 30px; letter-spacing: .25px; line-height: 46px; white-space: nowrap; }
.user { display: flex; align-items: center; justify-content: flex-end; padding-right: 37px; }
.user > svg:nth-child(2) { margin-left: 35px; }
.user .uchev { margin-left: 15px; }
.canvas { flex: 1; position: relative; min-height: 0; display: flex; overflow: hidden;
  background:
    linear-gradient(90deg, #0062ae, #005098 16%, #003a80 26%, #0062ac 36%, #007cc4 42%, #0c86d0 53%, #0066b6 62%, #003c80 71%, #00407f 80%, #00265e 88%, #00306a) top / 100% 13px no-repeat,
    linear-gradient(90deg, #0068b4, #0058a4 12%, #0078c2 26%, #0098d4 42%, #0098d6 52%, #0074c0 66%, #0064ae 80%, #004a90) bottom / 100% 18px no-repeat,
    linear-gradient(#0068b0, #0055a0 15%, #006eb8 28%, #0059a2 42%, #0068b0 58%, #004e94 70%, #007cbc 85%, #004088 92%, #0068b8) left / 50% 100% no-repeat,
    linear-gradient(#002c64, #0060a4 18%, #003470 35%, #003e80 45%, #006aac 55%, #002c6e 65%, #004c92 75%, #00549e) right / 50% 100% no-repeat; }
.water { position: absolute; inset: 0; width: 100%; height: 100%; opacity: .35; }

/* Open conversation */
.fox-canvas { padding: 12px 12px 16px 13px; }
.chat-box { position: relative; flex: 1; background: #fff; border: 1px solid #e2e8f0; padding: 0 15px 25px; display: flex; flex-direction: column; }
.chat-head { height: 83px; flex: none; display: flex; align-items: center; justify-content: space-between; padding: 0 10px 1px; }
.chat-head h2 { font-size: 36px; letter-spacing: .2px; line-height: 50px; }
.sq { width: 50px; height: 50px; border-radius: 7px; background: #edf2f7; display: flex; align-items: center; justify-content: center; }
.messages { flex: 1; background: #e8e8e8; padding: 0 15px 15px; display: flex; flex-direction: column; justify-content: flex-end; font-size: 19px; letter-spacing: -.1px; }
.msg { display: flex; flex: none; }
.msg span { height: 42px; border-radius: 25px; padding: 1px 19px 0; line-height: 42px; background: #bee3f8; white-space: nowrap; }
.msg .them { padding: 1px 19px 0 18.500px; background: #b9f5d0; }
.me { justify-content: flex-end; }
.m1 span { margin: 4px 0 0 5px; }
.m1 { margin-bottom: 13px; }
.m2 { margin-bottom: 13px; }
.m2 span { letter-spacing: -.1px; }
.m3 { margin: 0 0 4px 41px; letter-spacing: .1px; }
.m4 { align-items: flex-end; margin-bottom: 12px; }
.m4 span { height: 45px; margin-left: 5px; line-height: 44px; }
.m5 { margin-bottom: 4px; letter-spacing: .4px; }
.m5 span { height: 43px; padding-top: 2px; }
.m6 { margin-bottom: 15px; }
.msg .wide { letter-spacing: .06px; }
.compose { height: 50px; flex: none; border: 2px solid #3182ce; border-radius: 7px; padding: 4px 0 0 20px; display: flex; align-items: center; line-height: 28px; letter-spacing: -.35px; }
.compose i { width: 1px; height: 27px; margin-top: -2px; background: #000; }

/* Edge chrome */
.edge-tabs { height: 50px; flex: none; background: #5a5a5a; border-bottom: 1px solid #4b4b4b; display: flex; align-items: center; padding-top: 12px; color: #d8d8d8; }
.edge-tabs > * { flex: none; }
.e-side { margin-left: 20px; }
.sep { width: 1px; height: 25px; background: #a5a5a5; }
.s1 { margin-left: 20px; }
.gfg { margin-left: 15px; }
.s2 { margin-left: 13px; }
.e-new { margin-left: 14px; }
.etab-text { width: 41px; margin-right: -4px; font-size: 14.500px; letter-spacing: -.2px; white-space: nowrap; overflow: hidden; line-height: 24px; padding-bottom: 2px; mask-image: linear-gradient(90deg, #000 60%, transparent 95%); }
.t-new { margin-left: 14px; }
.ex { margin-left: 10px; }
.s3 { margin-left: 13px; }
.e-edge { margin-left: 13px; }
.t-micro { margin-left: 13px; }
.e-mag { margin-left: 16px; color: #3a6b98; }
.t-if { margin-left: 16px; }
.t-is { margin-left: 16px; }
.etab-active { width: 117px; height: 38px; margin: -1px 0 0 13px; align-self: flex-end; border-radius: 6px 6px 0 0; background: #969696; box-shadow: 0 0 3px #3c3c3c; clip-path: inset(-4px -4px 0); color: #111; display: flex; align-items: center; padding-left: 13px; }
.etab-active .etab-text { margin-left: 13px; }
.e-plus { margin-left: 13px; color: #dcdcdc; }
.e-controls { margin: -13px 0 0 84px; }
.edge-bar { height: 48px; flex: none; display: flex; align-items: center; padding-left: 6px; color: #161616; }
.ebtn { width: 55px; flex: none; display: flex; justify-content: center; }
.edge-url { width: 384px; height: 38px; flex: none; margin-left: 8px; border-radius: 19px; background: #ababab; display: flex; align-items: center; padding: 0 22px; color: #111; }
.edge-url .url-text { margin-left: 19px; }
.edge-url em { color: #4c4c4c; }
.read { margin-left: auto; margin-right: 30px; }
.etools { display: flex; align-items: center; gap: 35.500px; margin-left: 24px; }
.etools svg:nth-child(5) { margin-left: -3px; }
.etools svg:nth-child(6) { margin-left: -5px; }
.edge-main { flex: 1; min-height: 0; display: flex; padding: 0 0 3px 4px; }
.edge-page { flex: none; width: 894px; border-radius: 10px; }
.edge-head .find { padding: 0 0 1px 32px; }
.edge-head .user { padding: 0 38px 1px 0; }
.bell-wrap { position: relative; }
.badge { position: absolute; left: 7px; top: -11px; width: 26px; height: 22px; border-radius: 11px; background: #d8140c; color: #fff; font-size: 14px; font-weight: 700; line-height: 22px; text-align: center; }
.edge-canvas { padding: 12px 12px 16px 13px; }
.panes { position: relative; flex: 1; display: flex; min-width: 0; }
.chats { width: 434px; flex: none; border: 1px solid #e2e8f0; border-radius: 10px; background: #fff; padding: 15px; display: flex; flex-direction: column; }
.chats-head { height: 120px; flex: none; padding: 0 15px 15px; display: flex; align-items: center; justify-content: space-between; }
.chats-head h2 { width: 115px; font-size: 34.500px; letter-spacing: 1.100px; line-height: 52.500px; }
.new-group { width: 234px; height: 50px; border-radius: 7px; background: #edf2f7; display: flex; align-items: center; justify-content: space-between; padding: 0 19px; font-family: Inter, sans-serif; font-size: 20.500px; font-weight: 500; letter-spacing: .15px; white-space: nowrap; }
.chat-list { flex: 1; min-height: 0; background: #f8f8f8; border-radius: 10px; padding: 15px; display: flex; flex-direction: column; gap: 10px; overflow: hidden; color: #000; }
.chat-list li { height: 72.500px; flex: none; border-radius: 10px; background: #e8e8e8; padding: 11px 15px 0; }
.chat-list .solo { height: 50px; }
.chat-list p { font-size: 19px; line-height: 30px; letter-spacing: 0; font-weight: 400; }
.chat-list small { display: block; font-size: 14.300px; font-weight: 400; line-height: 21px; letter-spacing: .02px; white-space: nowrap; }
.chat-list b { font-size: 14px; font-weight: 700; }
.empty { flex: 1; border: 1px solid #e2e8f0; background: #fff; display: flex; align-items: center; padding: 0 0 17px 15px; }
.empty p { font-size: 37px; line-height: 57px; letter-spacing: 1.200px; white-space: nowrap; }
.edge-rail { flex: 1; display: flex; flex-direction: column; align-items: center; padding: 16px 0 0 5px; gap: 28.100px; }
.rail-plus { margin-top: 8px; }
.rail-line { width: 35px; height: 1px; margin-top: auto; background: #757575; }
.rail-line + svg { margin-top: -8px; }
.gear { margin: 3px 0 12px; }
.rail-bing { position: absolute; right: 6px; top: 54px; }

/* Taskbar */
.taskbar { position: absolute; left: 0; right: 0; bottom: 0; height: 60px; border-top: 1px solid #484848; background: #202020; display: flex; align-items: center; color: #fff; }
.win { margin-left: 558px; }
.tsearch { width: 275px; height: 40px; flex: none; margin: -1px 0 0 16px; border: 1px solid #4c4c4c; border-top-color: #646464; border-radius: 20px; background: #3f3f3f; display: flex; align-items: center; padding: 0 7px 0 14px; font-size: 17px; letter-spacing: -.6px; color: #cfcfcf; }
.tsearch span { margin: 1px auto 0 12px; }
.apps { display: flex; gap: 5px; margin-left: 6px; }
.app { position: relative; width: 50px; height: 50px; display: flex; align-items: center; justify-content: center; padding-bottom: 1px; border-radius: 5px; }
.on { background: #2d2d2d; border: 1px solid #383838; }
.run::after, .on::after { content: ""; position: absolute; left: 21px; bottom: 1px; width: 8px; height: 4px; border-radius: 2px; background: #9a9a9a; }
.on::after { left: 14px; width: 20px; bottom: 0; background: #666; }
.pc { width: 26px; height: 26px; padding: 3px; background: linear-gradient(135deg, #19dd78, #dcf000 45%, #9be82e); }
.pc b { display: block; height: 20px; padding-left: 2px; background: linear-gradient(#fff, #fff) 3px 16px / 7px 1.500px no-repeat, #0a120a; font-size: 11px; letter-spacing: -.3px; line-height: 13px; color: #fff; }
.tray { display: flex; align-items: center; flex: 1; font-size: 15px; letter-spacing: -.25px; line-height: 20px; }
.t-up { margin-left: 222px; }
.lang { width: 40px; margin: -2px 0 0 21px; text-align: center; }
.t-wifi { margin-left: 17px; }
.t-vol { margin-left: 10px; }
.t-bat { margin-left: 9px; }
.clock { width: 90px; margin: -2px 0 0 7px; text-align: right; white-space: nowrap; }
.t-bell { margin-left: 12px; }
```
